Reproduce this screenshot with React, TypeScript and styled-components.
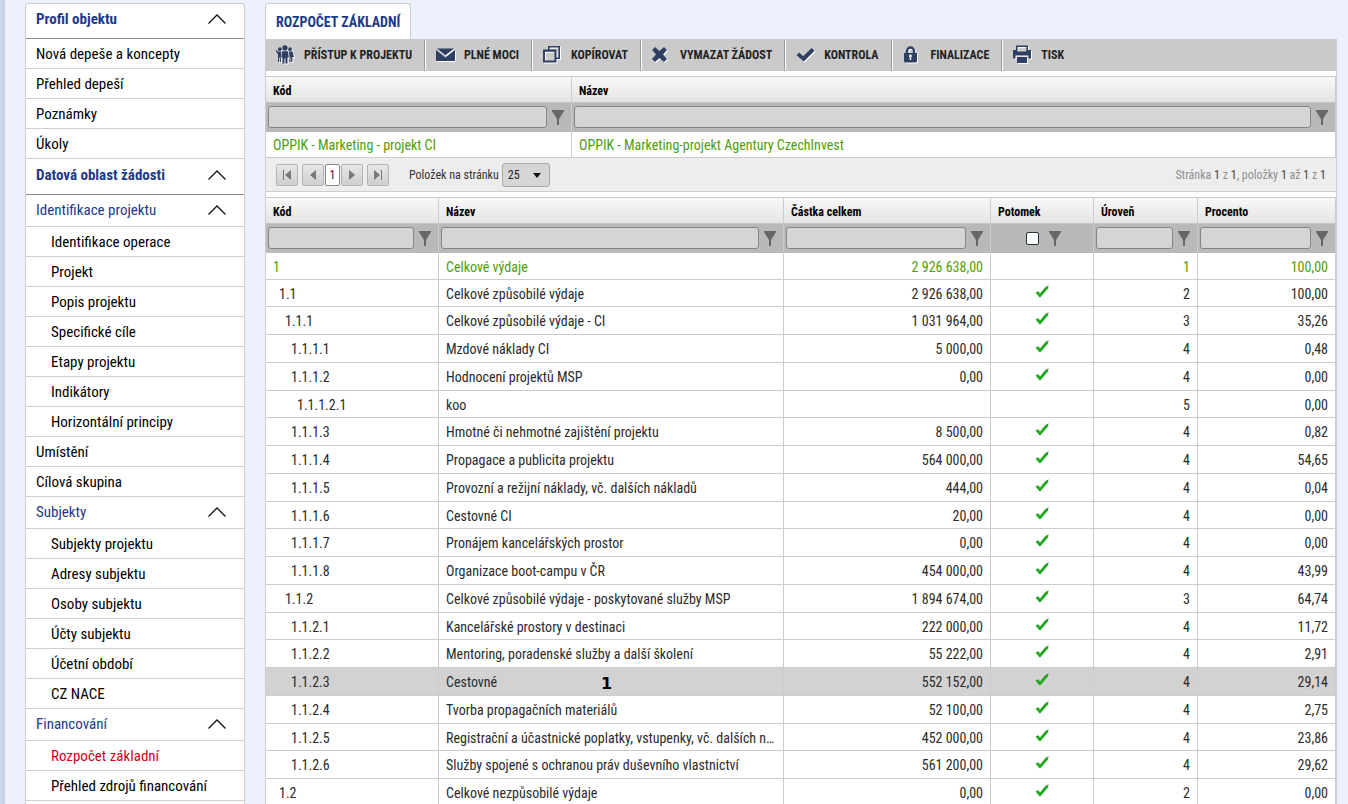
import React from "react";
import styled, { createGlobalStyle, css } from "styled-components";

const GlobalStyle = createGlobalStyle`
  *, *::before, *::after { box-sizing: border-box; }
  body {
    margin: 0;
    background: #edf0fd;
    color: #222;
    font-family: "Roboto Condensed", "Liberation Sans Narrow", Roboto, sans-serif;
    font-size: 14px;
    line-height: 20px;
  }
  button, input, select { font: inherit; color: inherit; margin: 0; }
  a { color: inherit; text-decoration: none; }
`;

const Shell = styled.div`
  display: flex;
  height: 100vh;
  overflow: hidden;
  padding: 3px 11px 0 25px;
  background: linear-gradient(to right, #cfd7ec, #c3cce3) 0 0 / 5px 100% no-repeat;
`;

/* ---------- side menu ---------- */

const Sidebar = styled.nav`
  flex: none;
  width: 220px;
  margin-right: 20px;
  background: #fff;
  border: 1px solid #ccc;
  border-bottom: 0;
  border-radius: 3px 3px 0 0;
`;

const menuRow = css`
  display: flex;
  align-items: center;
  width: 100%;
  border: 0;
  border-bottom: 1px solid #d0d0d0;
  background: none;
  font-size: 15px;
  line-height: 20px;
  text-align: left;
`;

const MainHeading = styled.button`
  ${menuRow}
  justify-content: space-between;
  height: 36px;
  padding: 0 18px 4px 10px;
  border-bottom-color: #8a8a8a;
  color: #1c3a8a;
  font-weight: 700;
  &:first-child { height: 35px; }
`;

const SubHeading = styled.button`
  ${menuRow}
  justify-content: space-between;
  height: 32px;
  padding: 0 18px 1px 10px;
  color: #1c3a8a;
`;

const MenuLink = styled.a<{ $nested?: boolean; $active?: boolean }>`
  ${menuRow}
  height: 30px;
  padding-left: ${(p) => (p.$nested ? 25 : 10)}px;
  color: ${(p) => (p.$active ? "#d4001f" : "#000")};
`;

const Chevron = () => (
  <svg width="18" height="10" viewBox="0 0 18 10" fill="none" stroke="#111" strokeWidth="1.3">
    <path d="M0.5 9.5 L9 1 L17.5 9.5" />
  </svg>
);

type MenuEntry = { kind: "main" | "sub" | "item" | "nested"; label: string; active?: boolean };

const menu: MenuEntry[] = [
  { kind: "main", label: "Profil objektu" },
  { kind: "item", label: "Nová depeše a koncepty" },
  { kind: "item", label: "Přehled depeší" },
  { kind: "item", label: "Poznámky" },
  { kind: "item", label: "Úkoly" },
  { kind: "main", label: "Datová oblast žádosti" },
  { kind: "sub", label: "Identifikace projektu" },
  { kind: "nested", label: "Identifikace operace" },
  { kind: "nested", label: "Projekt" },
  { kind: "nested", label: "Popis projektu" },
  { kind: "nested", label: "Specifické cíle" },
  { kind: "nested", label: "Etapy projektu" },
  { kind: "nested", label: "Indikátory" },
  { kind: "nested", label: "Horizontální principy" },
  { kind: "item", label: "Umístění" },
  { kind: "item", label: "Cílová skupina" },
  { kind: "sub", label: "Subjekty" },
  { kind: "nested", label: "Subjekty projektu" },
  { kind: "nested", label: "Adresy subjektu" },
  { kind: "nested", label: "Osoby subjektu" },
  { kind: "nested", label: "Účty subjektu" },
  { kind: "nested", label: "Účetní období" },
  { kind: "nested", label: "CZ NACE" },
  { kind: "sub", label: "Financování" },
  { kind: "nested", label: "Rozpočet základní", active: true },
  { kind: "nested", label: "Přehled zdrojů financování" },
];

/* ---------- content frame ---------- */

const Content = styled.main`
  flex: 1;
  min-width: 0;
  display: flex;
  flex-direction: column;
`;

const Tab = styled.a`
  flex: none;
  align-self: flex-start;
  height: 36px;
  padding: 8px 10px 0;
  background: #fff;
  border: 1px solid #ccc;
  border-bottom: 0;
  border-radius: 3px 3px 0 0;
  color: #1c3a8a;
  font-weight: 700;
`;

const Panel = styled.section`
  flex: 1;
  display: flex;
  flex-direction: column;
  gap: 5px;
  background: #fff;
  border: 1px solid #ccc;
  border-width: 1px 1px 0;
`;

const Toolbar = styled.div`
  display: flex;
  flex: none;
  height: 31px;
  background: #cacaca;
`;

const ToolButton = styled.button`
  display: flex;
  align-items: center;
  padding: 0 12px 2px 10px;
  border: 0;
  border-right: 1px solid #999;
  box-shadow: 1px 0 0 #fff;
  margin-right: 1px;
  background: none;
  color: #222;
  font-size: 12px;
  font-weight: 700;
  text-transform: uppercase;
  white-space: nowrap;
  &:last-child { border-right: 0; box-shadow: none; }
  svg { margin-right: 8px; filter: drop-shadow(1px 1px 0 #fff); }
`;

const navy = "#2e3f63";

const icons: Record<string, React.ReactNode> = {
  people: (
    <>
      <circle cx="9" cy="3" r="2.7" />
      <circle cx="3.9" cy="4.2" r="1.9" />
      <circle cx="14.1" cy="4.2" r="1.9" />
      <path d="M0 4.5 L1.6 6.6 H5.2 L4.8 12 L5 17 H3.9 V12.5 H3.2 V17 H2 V9.5 L0 6.2Z" />
      <path d="M6 6.3 H12 L12.8 12.5 H11.5 V18.5 H9.5 V13.5 H8.5 V18.5 H6.5 V12.5 H5.2Z" />
      <path d="M12.8 6.6 H16.6 L18 12 H16.4 V17 H15 V12.5 H14.4 V17 H13.3 L13.6 12Z" />
    </>
  ),
  mail: (
    <>
      <path d="M0 5 L9.5 12.5 L19 5 V16 H0Z" />
      <path d="M1 3.4 H18 L9.5 10.2Z" />
    </>
  ),
  copy: (
    <path
      fillRule="evenodd"
      d="M5 1 H17 V14 H13.5 V17.5 H0 V4.5 H5Z M6.6 2.6 V4.5 H13.5 V12.4 H15.4 V2.6Z M2 6.8 V15.5 H11.5 V6.8Z"
    />
  ),
  cross: <path d="M3 2 L7.5 6 L12 2 L15 5 L11 9.5 L15 14 L12 17 L7.5 13 L3 17 L0 14 L4 9.5 L0 5Z" />,
  check: <path d="M3.3 7.5 L7.2 11.2 L15.6 3 L18.6 5.8 L7.8 16.5 L0.5 10.2Z" />,
  lock: (
    <>
      <path d="M4 9 V6 a3.5 3.5 0 0 1 7 0 V9" fill="none" stroke={navy} strokeWidth="2.4" />
      <path
        fillRule="evenodd"
        d="M1 8 H14 V16.5 L13 17.5 H2 L1 16.5Z M7.5 9.6 a1.5 1.5 0 0 0 -0.8 2.8 V15 H8.3 V12.4 a1.5 1.5 0 0 0 -0.8 -2.8Z"
      />
    </>
  ),
  print: (
    <>
      <path fillRule="evenodd" d="M3 0.5 H15 V5 H18 V13.5 H15.5 V10.5 H2.5 V13.5 H0 V5 H3Z M4.6 2 V6.5 H13.4 V2Z" />
      <path d="M4 12 H14 V18 H4Z" />
    </>
  ),
};

const tools = [
  { icon: "people", label: "Přístup k projektu" },
  { icon: "mail", label: "Plné moci" },
  { icon: "copy", label: "Kopírovat" },
  { icon: "cross", label: "Vymazat žádost" },
  { icon: "check", label: "Kontrola" },
  { icon: "lock", label: "Finalizace" },
  { icon: "print", label: "Tisk" },
];

/* ---------- grids ---------- */

const Grid = styled.table`
  width: 100%;
  table-layout: fixed;
  border-collapse: separate;
  border-spacing: 0;
  border: 1px solid #ccc;
  border-width: 1px 1px 0 0;
`;

const HeadCell = styled.th`
  height: 26px;
  padding: 2px 7px 0;
  border-bottom: 1px solid #c4c4c4;
  background: linear-gradient(#f8f8f8, #e4e4e4);
  color: #000;
  font-size: 12px;
  font-weight: 700;
  text-align: left;
  & + & { border-left: 1px solid #ccc; }
`;

const FilterCell = styled.td`
  height: 29px;
  padding: 0 7px 1px 2px;
  background: #b9b9b9;
  & + & { border-left: 1px solid #ccc; }
`;

const FilterBox = styled.div<{ $centered?: boolean }>`
  display: flex;
  align-items: center;
  justify-content: ${(p) => (p.$centered ? "center" : "flex-start")};
  gap: ${(p) => (p.$centered ? 10 : 5)}px;
  padding-left: ${(p) => (p.$centered ? 8 : 0)}px;
`;

const FilterInput = styled.input`
  flex: 1;
  min-width: 0;
  height: 22px;
  border: 1px solid #858585;
  border-radius: 3px;
  background: #d5d5d5;
`;

const FilterCheck = styled.input`
  appearance: none;
  width: 13px;
  height: 13px;
  border: 1px solid #1f3438;
  border-radius: 2px;
  background: #fff;
`;

const FunnelButton = styled.button`
  display: flex;
  padding: 0;
  border: 0;
  background: none;
`;

const Funnel = ({ label }: { label: string }) => (
  <FunnelButton type="button" aria-label={label}>
    <svg width="12" height="15" viewBox="0 0 12 15" fill="#666">
      <path d="M0 0 H12 V1 L7 9 V15 H5 V9 L0 1Z" />
    </svg>
  </FunnelButton>
);

const BodyRow = styled.tr<{ $selected?: boolean; $green?: boolean }>`
  background: ${(p) => (p.$selected ? "#d2d2d2" : "#fff")};
  color: ${(p) => (p.$green ? "#519c08" : "#2b2b2b")};
  height: 28px;
  &:first-child, &:nth-child(4n + 2) { height: 27px; }
`;

const ShortRow = styled(BodyRow)`
  &:first-child { height: 26px; }
`;

const Cell = styled.td<{ $right?: boolean; $center?: boolean; $depth?: number }>`
  position: relative;
  padding: 1px 7px 0;
  padding-left: ${(p) => 7 + 6 * (p.$depth ?? 0)}px;
  border-bottom: 1px solid #ccc;
  line-height: 20px;
  text-align: ${(p) => (p.$right ? "right" : p.$center ? "center" : "left")};
  overflow: hidden;
  text-overflow: ellipsis;
  white-space: nowrap;
  & + & { border-left: 1px solid #ccc; }
  svg { vertical-align: 1px; }
`;

const Mark = styled.b`
  position: absolute;
  left: 162px;
  top: 6px;
  color: #000;
  font: 700 16px/20px "DejaVu Sans", sans-serif;
`;

const Tick = () => (
  <svg width="14" height="13" viewBox="0 0 14 13" fill="#22a822">
    <path d="M0.5 7.6 L3.4 6.2 L5 8.6 L10.4 2 L13.6 0.3 L13 3.4 L5.4 12.3 L4.4 12.3Z" />
  </svg>
);

/* ---------- pager ---------- */

const Pager = styled.div`
  display: flex;
  align-items: center;
  height: 34px;
  padding: 0 10px;
  border-bottom: 1px solid #ccc;
  background: #ededed;
`;

const PageButton = styled.button<{ $gap?: "left" | "right" }>`
  display: flex;
  align-items: center;
  justify-content: center;
  width: 22px;
  height: 22px;
  margin-left: ${(p) => (p.$gap === "left" ? 4 : 0)}px;
  margin-right: ${(p) => (p.$gap === "right" ? 4 : 0)}px;
  padding: 0;
  border: 1px solid #b4b4b4;
  border-radius: 2px;
  background: linear-gradient(#e6e6e6, #cfcfcf);
`;

const PageNumber = styled(PageButton)`
  width: 15px;
  margin: 0 1px;
  border-color: #888;
  background: #fff;
  font-size: 12px;
`;

const SizeLabel = styled.label`
  margin-left: 20px;
  color: #333;
  font-size: 12px;
`;

const SelectWrap = styled.span`
  position: relative;
  margin-left: 3px;
  svg { position: absolute; right: 9px; top: 10px; pointer-events: none; }
`;

const SizeSelect = styled.select`
  appearance: none;
  display: block;
  width: 48px;
  height: 24px;
  padding: 0 5px;
  border: 1px solid #aaa;
  border-radius: 3px;
  background: #d5d5d5;
  font-size: 12px;
`;

const PageInfo = styled.span`
  margin-left: auto;
  color: #8f8f8f;
  font-size: 12px;
  b { color: #444; font-weight: 400; }
`;

const Arrow = ({ d }: { d: string }) => (
  <svg width="10" height="10" viewBox="0 0 10 10" fill="#777" stroke="none">
    <path d={d} />
  </svg>
);

/* ---------- data ---------- */

type BudgetRow = [code: string, name: string, amount: string, child: boolean, level: string, percent: string];

const rows: BudgetRow[] = [
  ["1", "Celkové výdaje", "2 926 638,00", false, "1", "100,00"],
  ["1.1", "Celkové způsobilé výdaje", "2 926 638,00", true, "2", "100,00"],
  ["1.1.1", "Celkové způsobilé výdaje - CI", "1 031 964,00", true, "3", "35,26"],
  ["1.1.1.1", "Mzdové náklady CI", "5 000,00", true, "4", "0,48"],
  ["1.1.1.2", "Hodnocení projektů MSP", "0,00", true, "4", "0,00"],
  ["1.1.1.2.1", "koo", "", false, "5", "0,00"],
  ["1.1.1.3", "Hmotné či nehmotné zajištění projektu", "8 500,00", true, "4", "0,82"],
  ["1.1.1.4", "Propagace a publicita projektu", "564 000,00", true, "4", "54,65"],
  ["1.1.1.5", "Provozní a režijní náklady, vč. dalších nákladů", "444,00", true, "4", "0,04"],
  ["1.1.1.6", "Cestovné CI", "20,00", true, "4", "0,00"],
  ["1.1.1.7", "Pronájem kancelářských prostor", "0,00", true, "4", "0,00"],
  ["1.1.1.8", "Organizace boot-campu v ČR", "454 000,00", true, "4", "43,99"],
  ["1.1.2", "Celkové způsobilé výdaje - poskytované služby MSP", "1 894 674,00", true, "3", "64,74"],
  ["1.1.2.1", "Kancelářské prostory v destinaci", "222 000,00", true, "4", "11,72"],
  ["1.1.2.2", "Mentoring, poradenské služby a další školení", "55 222,00", true, "4", "2,91"],
  ["1.1.2.3", "Cestovné", "552 152,00", true, "4", "29,14"],
  ["1.1.2.4", "Tvorba propagačních materiálů", "52 100,00", true, "4", "2,75"],
  ["1.1.2.5", "Registrační a účastnické poplatky, vstupenky, vč. dalších n...", "452 000,00", true, "4", "23,86"],
  ["1.1.2.6", "Služby spojené s ochranou práv duševního vlastnictví", "561 200,00", true, "4", "29,62"],
  ["1.2", "Celkové nezpůsobilé výdaje", "0,00", true, "2", "0,00"],
];

const columns = ["Kód", "Název", "Částka celkem", "Potomek", "Úroveň", "Procento"];

const Filter = ({ name }: { name: string }) => (
  <FilterCell>
    <FilterBox>
      <FilterInput type="text" aria-label={name} />
      <Funnel label={`Filtr ${name}`} />
    </FilterBox>
  </FilterCell>
);

const Col = styled.col<{ $width?: number }>`
  width: ${(p) => (p.$width ? `${p.$width}px` : "auto")};
`;

export default function App() {
  return (
    <>
      <GlobalStyle />
      <Shell>
        <Sidebar>
          {menu.map((m) => {
            if (m.kind === "main")
              return <MainHeading key={m.label} type="button">{m.label}<Chevron /></MainHeading>;
            if (m.kind === "sub")
              return <SubHeading key={m.label} type="button">{m.label}<Chevron /></SubHeading>;
            return (
              <MenuLink key={m.label} href="#" $nested={m.kind === "nested"} $active={m.active}>
                {m.label}
              </MenuLink>
            );
          })}
        </Sidebar>

        <Content>
          <Tab href="#">ROZPOČET ZÁKLADNÍ</Tab>
          <Panel>
            <Toolbar>
              {tools.map((t) => (
                <ToolButton key={t.icon} type="button">
                  <svg width="20" height="20" viewBox="0 0 20 20" fill={navy}>{icons[t.icon]}</svg>
                  {t.label}
                </ToolButton>
              ))}
            </Toolbar>

            <div>
              <Grid>
                <colgroup>
                  <Col $width={305} />
                  <Col />
                </colgroup>
                <thead>
                  <tr>
                    <HeadCell>Kód</HeadCell>
                    <HeadCell>Název</HeadCell>
                  </tr>
                  <tr>
                    <Filter name="Kód projektu" />
                    <Filter name="Název projektu" />
                  </tr>
                </thead>
                <tbody>
                  <ShortRow $green>
                    <Cell>OPPIK - Marketing - projekt CI</Cell>
                    <Cell>OPPIK - Marketing-projekt Agentury CzechInvest</Cell>
                  </ShortRow>
                </tbody>
              </Grid>
              <Pager>
                <PageButton type="button" aria-label="První" $gap="right"><Arrow d="M1 0 H2 V10 H1Z M9 0 V10 L3 5Z" /></PageButton>
                <PageButton type="button" aria-label="Předchozí"><Arrow d="M8 0 V10 L2 5Z" /></PageButton>
                <PageNumber type="button">1</PageNumber>
                <PageButton type="button" aria-label="Další"><Arrow d="M2 0 V10 L8 5Z" /></PageButton>
                <PageButton type="button" aria-label="Poslední" $gap="left"><Arrow d="M8 0 H9 V10 H8Z M1 0 V10 L7 5Z" /></PageButton>
                <SizeLabel htmlFor="page-size">Položek na stránku</SizeLabel>
                <SelectWrap>
                  <SizeSelect id="page-size" defaultValue="25">
                    <option>25</option>
                    <option>50</option>
                  </SizeSelect>
                  <svg width="8" height="5" viewBox="0 0 8 5" fill="#111"><path d="M0 0 H8 L4 5Z" /></svg>
                </SelectWrap>
                <PageInfo>
                  Stránka <b>1</b> z <b>1</b>, položky <b>1</b> až <b>1</b> z <b>1</b>
                </PageInfo>
              </Pager>
            </div>

            <Grid>
              <colgroup>
                <Col $width={172} />
                <Col />
                <Col $width={207} />
                <Col $width={103} />
                <Col $width={104} />
                <Col $width={138} />
              </colgroup>
              <thead>
                <tr>{columns.map((c) => <HeadCell key={c}>{c}</HeadCell>)}</tr>
                <tr>
                  {columns.map((c) =>
                    c === "Potomek" ? (
                      <FilterCell key={c}>
                        <FilterBox $centered>
                          <FilterCheck type="checkbox" aria-label={c} />
                          <Funnel label={`Filtr ${c}`} />
                        </FilterBox>
                      </FilterCell>
                    ) : (
                      <Filter key={c} name={c} />
                    )
                  )}
                </tr>
              </thead>
              <tbody>
                {rows.map(([code, name, amount, child, level, percent]) => (
                  <BodyRow key={code} $green={code === "1"} $selected={code === "1.1.2.3"}>
                    <Cell $depth={code.split(".").length - 1}>{code}</Cell>
                    <Cell>
                      {name}
                      {code === "1.1.2.3" && <Mark>1</Mark>}
                    </Cell>
                    <Cell $right>{amount}</Cell>
                    <Cell $center>{child && <Tick />}</Cell>
                    <Cell $right>{level}</Cell>
                    <Cell $right>{percent}</Cell>
                  </BodyRow>
                ))}
              </tbody>
            </Grid>
          </Panel>
        </Content>
      </Shell>
    </>
  );
}
